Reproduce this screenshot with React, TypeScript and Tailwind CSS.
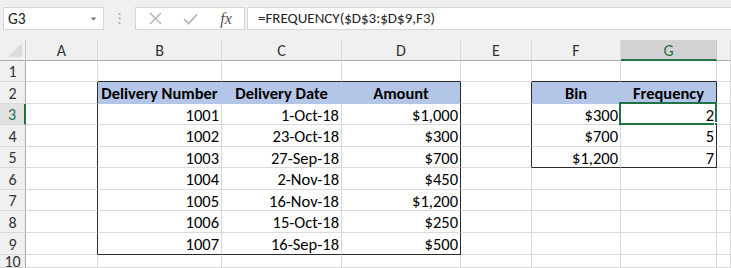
import React from "react";

const COLS = [26, 72, 124, 120, 119, 71, 89, 96, 14];
const ROWH = [21, 22, 21, 22, 21, 22, 21, 22, 22, 13];
const LETTERS = ["", "A", "B", "C", "D", "E", "F", "G", ""];
const FONT = { fontFamily: "Carlito, Calibri, Lato, 'Open Sans', sans-serif" };

type CellData = { text: string; bold?: boolean; align: "c" | "r" };

const DATA: Record<string, CellData> = {};
const put = (r: number, c: number, text: string, bold = false, align: "c" | "r" = "r") => {
  DATA[`${r}-${c}`] = { text, bold, align };
};
put(2, 2, "Delivery Number", true, "c");
put(2, 3, "Delivery Date", true, "c");
put(2, 4, "Amount", true, "c");
put(2, 6, "Bin", true, "c");
put(2, 7, "Frequency", true, "c");
const rows: [string, string, string][] = [
  ["1001", "1-Oct-18", "$1,000"],
  ["1002", "23-Oct-18", "$300"],
  ["1003", "27-Sep-18", "$700"],
  ["1004", "2-Nov-18", "$450"],
  ["1005", "16-Nov-18", "$1,200"],
  ["1006", "15-Oct-18", "$250"],
  ["1007", "16-Sep-18", "$500"],
];
rows.forEach((row, i) => {
  put(3 + i, 2, row[0]);
  put(3 + i, 3, row[1]);
  put(3 + i, 4, row[2]);
});
[["$300", "2"], ["$700", "5"], ["$1,200", "7"]].forEach((row, i) => {
  put(3 + i, 6, row[0]);
  put(3 + i, 7, row[1]);
});

const inT1 = (r: number, c: number) => r >= 2 && r <= 9 && c >= 2 && c <= 4;
const inT2 = (r: number, c: number) => r >= 2 && r <= 5 && c >= 6 && c <= 7;

function rightClass(r: number, c: number) {
  if ((inT1(r, c) && c === 4) || (inT2(r, c) && c === 7)) return "border-r-[#2b2b2b]";
  if (c === 1 && r >= 2 && r <= 9) return "border-r-[#2b2b2b]";
  if (c === 5 && r >= 2 && r <= 5) return "border-r-[#2b2b2b]";
  if (r === 2 && (inT1(r, c) || inT2(r, c))) return "border-r-[#b4c6e7]";
  return "border-r-[#dadada]";
}
function bottomClass(r: number, c: number) {
  if (c >= 2 && c <= 4 && (r === 1 || r === 9)) return "border-b-[#2b2b2b]";
  if (c >= 6 && c <= 7 && (r === 1 || r === 5)) return "border-b-[#2b2b2b]";
  if (r === 2 && (inT1(r, c) || inT2(r, c))) return "border-b-[#b4c6e7]";
  return "border-b-[#dadada]";
}

function Cell({ r, c }: { r: number; c: number }) {
  const d = DATA[`${r}-${c}`];
  const fill = r === 2 && (inT1(r, c) || inT2(r, c));
  const selected = r === 3 && c === 7;
  return (
    <div
      className={`relative flex items-center pt-[2px] shrink-0 border-r border-b ${rightClass(r, c)} ${bottomClass(r, c)} ${
        fill ? "bg-[#b4c6e7]" : "bg-white"
      } ${d && d.align === "c" ? "justify-center" : "justify-end pr-[2px]"}`}
      style={{ width: COLS[c], height: ROWH[r - 1] }}
    >
      {d && (
        <span className={`whitespace-nowrap text-[16.5px] leading-none text-black ${d.bold ? "font-bold" : ""}`}>
          {d.text}
        </span>
      )}
      {selected && (
        <>
          <div className="absolute -left-[2px] -top-[2px] -right-[1px] -bottom-[1px] border-2 border-[#217346]" />
          <div className="absolute -right-[4px] -bottom-[4px] w-[6px] h-[6px] bg-[#217346] border border-white" />
        </>
      )}
    </div>
  );
}

function FormulaBar() {
  return (
    <div className="h-[40px] bg-[#f0f0f0] flex flex-col">
      <div className="flex items-start pt-[7px] h-[31px]">
        <div className="ml-[3px] w-[101px] h-[23px] bg-white border border-[#d6d6d6] flex items-center justify-between pl-[4px] pr-[6px]">
          <span className="text-[15.5px] text-[#222] leading-none">G3</span>
          <svg width="7" height="4" viewBox="0 0 7 4">
            <path d="M0.5 0.5 L6.5 0.5 L3.5 3.5 Z" fill="#777" />
          </svg>
        </div>
        <div className="w-[31px] h-[23px] flex items-center justify-center">
          <svg width="3" height="11" viewBox="0 0 3 11">
            <rect x="0.5" y="0" width="2" height="2" fill="#b5b5b5" />
            <rect x="0.5" y="4.5" width="2" height="2" fill="#b5b5b5" />
            <rect x="0.5" y="9" width="2" height="2" fill="#b5b5b5" />
          </svg>
        </div>
        <div className="w-[110px] h-[23px] bg-white border border-[#d6d6d6] flex items-center">
          <div className="w-[36px] flex justify-center pl-[2px]">
            <svg width="13" height="13" viewBox="0 0 13 13">
              <path d="M1 1 L12 12 M12 1 L1 12" stroke="#b0b0b0" strokeWidth="1.3" />
            </svg>
          </div>
          <div className="w-[36px] flex justify-center">
            <svg width="15" height="12" viewBox="0 0 15 12">
              <path d="M1 6 L5.5 10.5 L14 1.5" stroke="#b0b0b0" strokeWidth="1.6" fill="none" />
            </svg>
          </div>
          <div className="w-[36px] flex justify-center">
            <span className="italic text-[16px] text-[#555] leading-none" style={{ fontFamily: "'Liberation Serif', serif" }}>
              fx
            </span>
          </div>
        </div>
        <div className="ml-[2px] flex-1 h-[23px] bg-white border border-[#d6d6d6] border-r-0 flex items-center pl-[10px]">
          <span className="text-[15px] text-[#222] leading-none whitespace-nowrap">=FREQUENCY($D$3:$D$9,F3)</span>
        </div>
      </div>
    </div>
  );
}

function HeaderRow() {
  return (
    <div className="flex h-[21px]">
      <div
        className="shrink-0 h-full bg-[#f0f0f0] border-r border-b border-r-[#c8c8c8] border-b-[#ababab] flex items-end justify-end pr-[3px] pb-[3px]"
        style={{ width: COLS[0] }}
      >
        <svg width="14" height="14" viewBox="0 0 14 14">
          <path d="M14 0 L14 14 L0 14 Z" fill="#dcdcdc" />
        </svg>
      </div>
      {COLS.slice(1).map((w, i) => {
        const c = i + 1;
        const sel = c === 7;
        return (
          <div
            key={c}
            className={`shrink-0 h-full flex items-center justify-center pt-[2px] text-[16px] leading-none border-r ${
              sel
                ? "bg-[#d2d2d2] text-[#217346] border-b-2 border-b-[#217346] border-r-[#c8c8c8]"
                : "bg-[#f0f0f0] text-[#333] border-b border-b-[#ababab] border-r-[#dadada]"
            }`}
            style={{ width: w }}
          >
            {LETTERS[c]}
          </div>
        );
      })}
    </div>
  );
}

export default function App() {
  return (
    <div className="w-[731px] h-[268px] overflow-hidden bg-white" style={FONT}>
      <FormulaBar />
      <HeaderRow />
      {ROWH.map((h, i) => {
        const r = i + 1;
        const sel = r === 3;
        return (
          <div key={r} className="flex" style={{ height: h }}>
            <div
              className={`shrink-0 h-full flex items-center justify-center pt-[2px] text-[16px] leading-none border-b border-b-[#dadada] ${
                sel ? "bg-[#e2e2e2] text-[#217346] border-r-2 border-r-[#217346]" : "bg-[#f0f0f0] text-[#333] border-r border-r-[#ababab]"
              }`}
              style={{ width: COLS[0] }}
            >
              {r}
            </div>
            {COLS.slice(1).map((_, j) => (
              <Cell key={j} r={r} c={j + 1} />
            ))}
          </div>
        );
      })}
    </div>
  );
}
